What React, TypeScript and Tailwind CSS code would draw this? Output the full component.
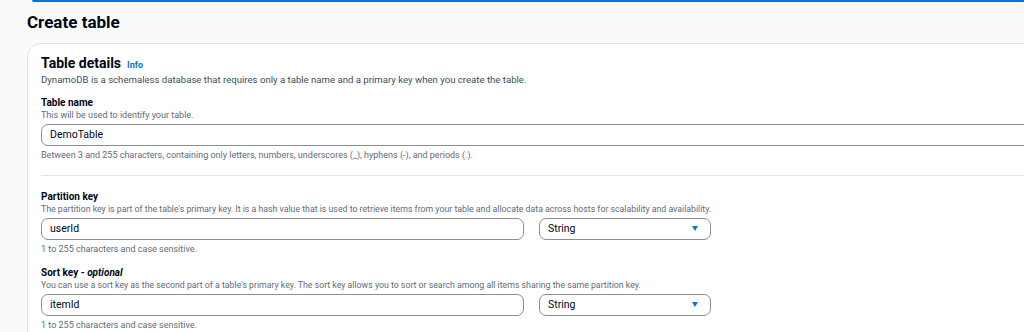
const labelCls = 'text-[10px] leading-[12px] font-bold text-[#000716]';
const descCls = 'text-[9px] leading-[12px] text-[#5f6b7a]';

function TextInput({ value, wide = false }: { value: string; wide?: boolean }) {
  return (
    <div
      className={`${wide ? 'w-[1200px]' : 'w-[483px]'} h-[22px] flex items-center px-[8px] border border-[#8c8c94] rounded-[7px] bg-white text-[10.5px] text-[#000716]`}
    >
      {value}
    </div>
  );
}

function SelectBox({ value }: { value: string }) {
  return (
    <div className="w-[172px] h-[22px] flex items-center justify-between pl-[8px] pr-[12px] border border-[#8c8c94] rounded-[7px] bg-white text-[10.5px] text-[#000716]">
      <span>{value}</span>
      <svg width="6" height="5" viewBox="0 0 6 5">
        <path d="M0 0 H6 L3 5 Z" fill="#0972d3" />
      </svg>
    </div>
  );
}

function KeyField({ label, optional, desc, value }: { label: string; optional?: boolean; desc: string; value: string }) {
  return (
    <div className="flex flex-col">
      <p className={labelCls}>
        {label}
        {optional && (
          <>
            {' - '}
            <i>optional</i>
          </>
        )}
      </p>
      <p className="text-[8.75px] leading-[12px] text-[#5f6b7a]">{desc}</p>
      <div className="mt-[3px] flex gap-[15px]">
        <TextInput value={value} />
        <SelectBox value="String" />
      </div>
      <p className={`${descCls} mt-[3px]`}>1 to 255 characters and case sensitive.</p>
    </div>
  );
}

export default function App() {
  return (
    <div className="w-[1024px] h-[332px] overflow-hidden bg-[#fafafa] font-['Roboto','Liberation_Sans',sans-serif]">
      <div className="ml-[32px] h-[2px] bg-[#0972d3] rounded-bl-[3px] shadow-[0_2px_8px_rgba(0,0,0,0.12)]" />
      <h1 className="ml-[27px] mt-[8px] text-[17px] leading-[24px] font-bold text-[#000716]">Create table</h1>
      <div className="ml-[27px] mt-[9px] w-[1100px] bg-white border border-[#e3e3e3] rounded-[14px] pl-[13px] pt-[10px] pb-[20px]">
        <div className="flex items-baseline gap-[6px]">
          <h2 className="text-[14px] leading-[18px] font-bold text-[#000716]">Table details</h2>
          <span className="text-[9px] font-bold text-[#0972d3]">Info</span>
        </div>
        <p className="text-[9.6px] leading-[14px] text-[#414d5c]">
          DynamoDB is a schemaless database that requires only a table name and a primary key when you create the table.
        </p>

        <div className="mt-[10px]">
          <p className={labelCls}>Table name</p>
          <p className={descCls}>This will be used to identify your table.</p>
          <div className="mt-[3px]">
            <TextInput value="DemoTable" wide />
          </div>
          <p className={`${descCls} mt-[3px]`}>
            Between 3 and 255 characters, containing only letters, numbers, underscores (_), hyphens (-), and periods (.).
          </p>
        </div>

        <div className="mt-[14px] h-px bg-[#e3e3e6]" />

        <div className="mt-[15px] flex flex-col gap-[12px]">
          <KeyField
            label="Partition key"
            desc="The partition key is part of the table's primary key. It is a hash value that is used to retrieve items from your table and allocate data across hosts for scalability and availability."
            value="userId"
          />
          <KeyField
            label="Sort key"
            optional
            desc="You can use a sort key as the second part of a table's primary key. The sort key allows you to sort or search among all items sharing the same partition key."
            value="itemId"
          />
        </div>
      </div>
    </div>
  );
}
